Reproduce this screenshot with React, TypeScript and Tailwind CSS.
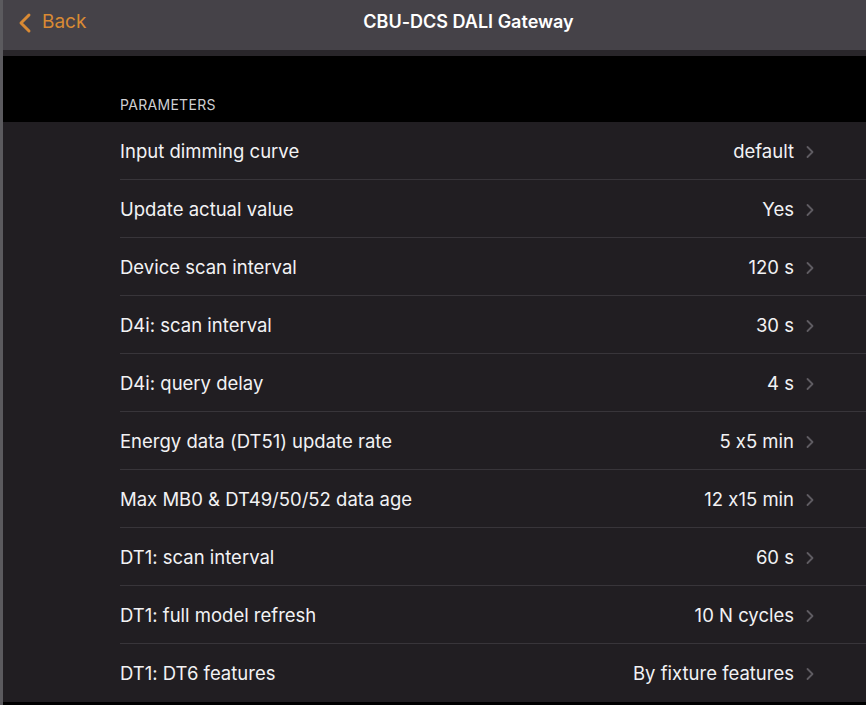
import { ChevronLeft, ChevronRight } from 'lucide-react';

const rows: [string, string][] = [
  ['Input dimming curve', 'default'],
  ['Update actual value', 'Yes'],
  ['Device scan interval', '120 s'],
  ['D4i: scan interval', '30 s'],
  ['D4i: query delay', '4 s'],
  ['Energy data (DT51) update rate', '5 x5 min'],
  ['Max MB0 & DT49/50/52 data age', '12 x15 min'],
  ['DT1: scan interval', '60 s'],
  ['DT1: full model refresh', '10 N cycles'],
  ['DT1: DT6 features', 'By fixture features'],
];

export default function App() {
  return (
    <div className="w-[866px] h-[705px] overflow-hidden bg-black flex font-['Inter','Liberation_Sans',sans-serif] [font-feature-settings:'calt'_0] antialiased">
      <div className="w-[3px] shrink-0 bg-[#5b5a5e]" />
      <div className="flex-1 flex flex-col">
        {/* top bar */}
        <div className="h-[50px] shrink-0 bg-[#454248] relative flex items-center pb-[8px]">
          <div className="absolute inset-0 pl-[68px] pb-[8px] flex items-center justify-center text-white text-[18px] font-semibold">
            CBU-DCS DALI Gateway
          </div>
          <button className="relative flex items-center text-[#d98a34] pl-[6px] h-full mt-[3px]">
            <ChevronLeft size={32} strokeWidth={2.2} />
            <span className="text-[19px] ml-[1px] -mt-[1px]">Back</span>
          </button>
        </div>
        <div className="h-[6px] shrink-0 bg-[#29262a]" />

        {/* section header */}
        <div className="h-[66px] shrink-0 flex items-end pl-[117px] pb-[7px]">
          <span className="text-[14px] text-[#cfcfd2] tracking-[0.3px]">PARAMETERS</span>
        </div>

        {/* list */}
        <div className="bg-[#211e22]">
          {rows.map(([label, value], i) => (
            <div key={label} className="pl-[117px]">
              <div
                className={`h-[58px] flex items-center pt-[2px] pr-[48px] text-[18.5px] text-[#f2f2f4] ${
                  i < rows.length - 1 ? 'border-b border-[#38353a]' : ''
                }`}
              >
                <span className="flex-1">{label}</span>
                <span>{value}</span>
                <ChevronRight size={20} strokeWidth={2.2} className="text-[#5f5c62] ml-[6px] mr-[-2px]" />
              </div>
            </div>
          ))}
        </div>
      </div>
    </div>
  );
}
